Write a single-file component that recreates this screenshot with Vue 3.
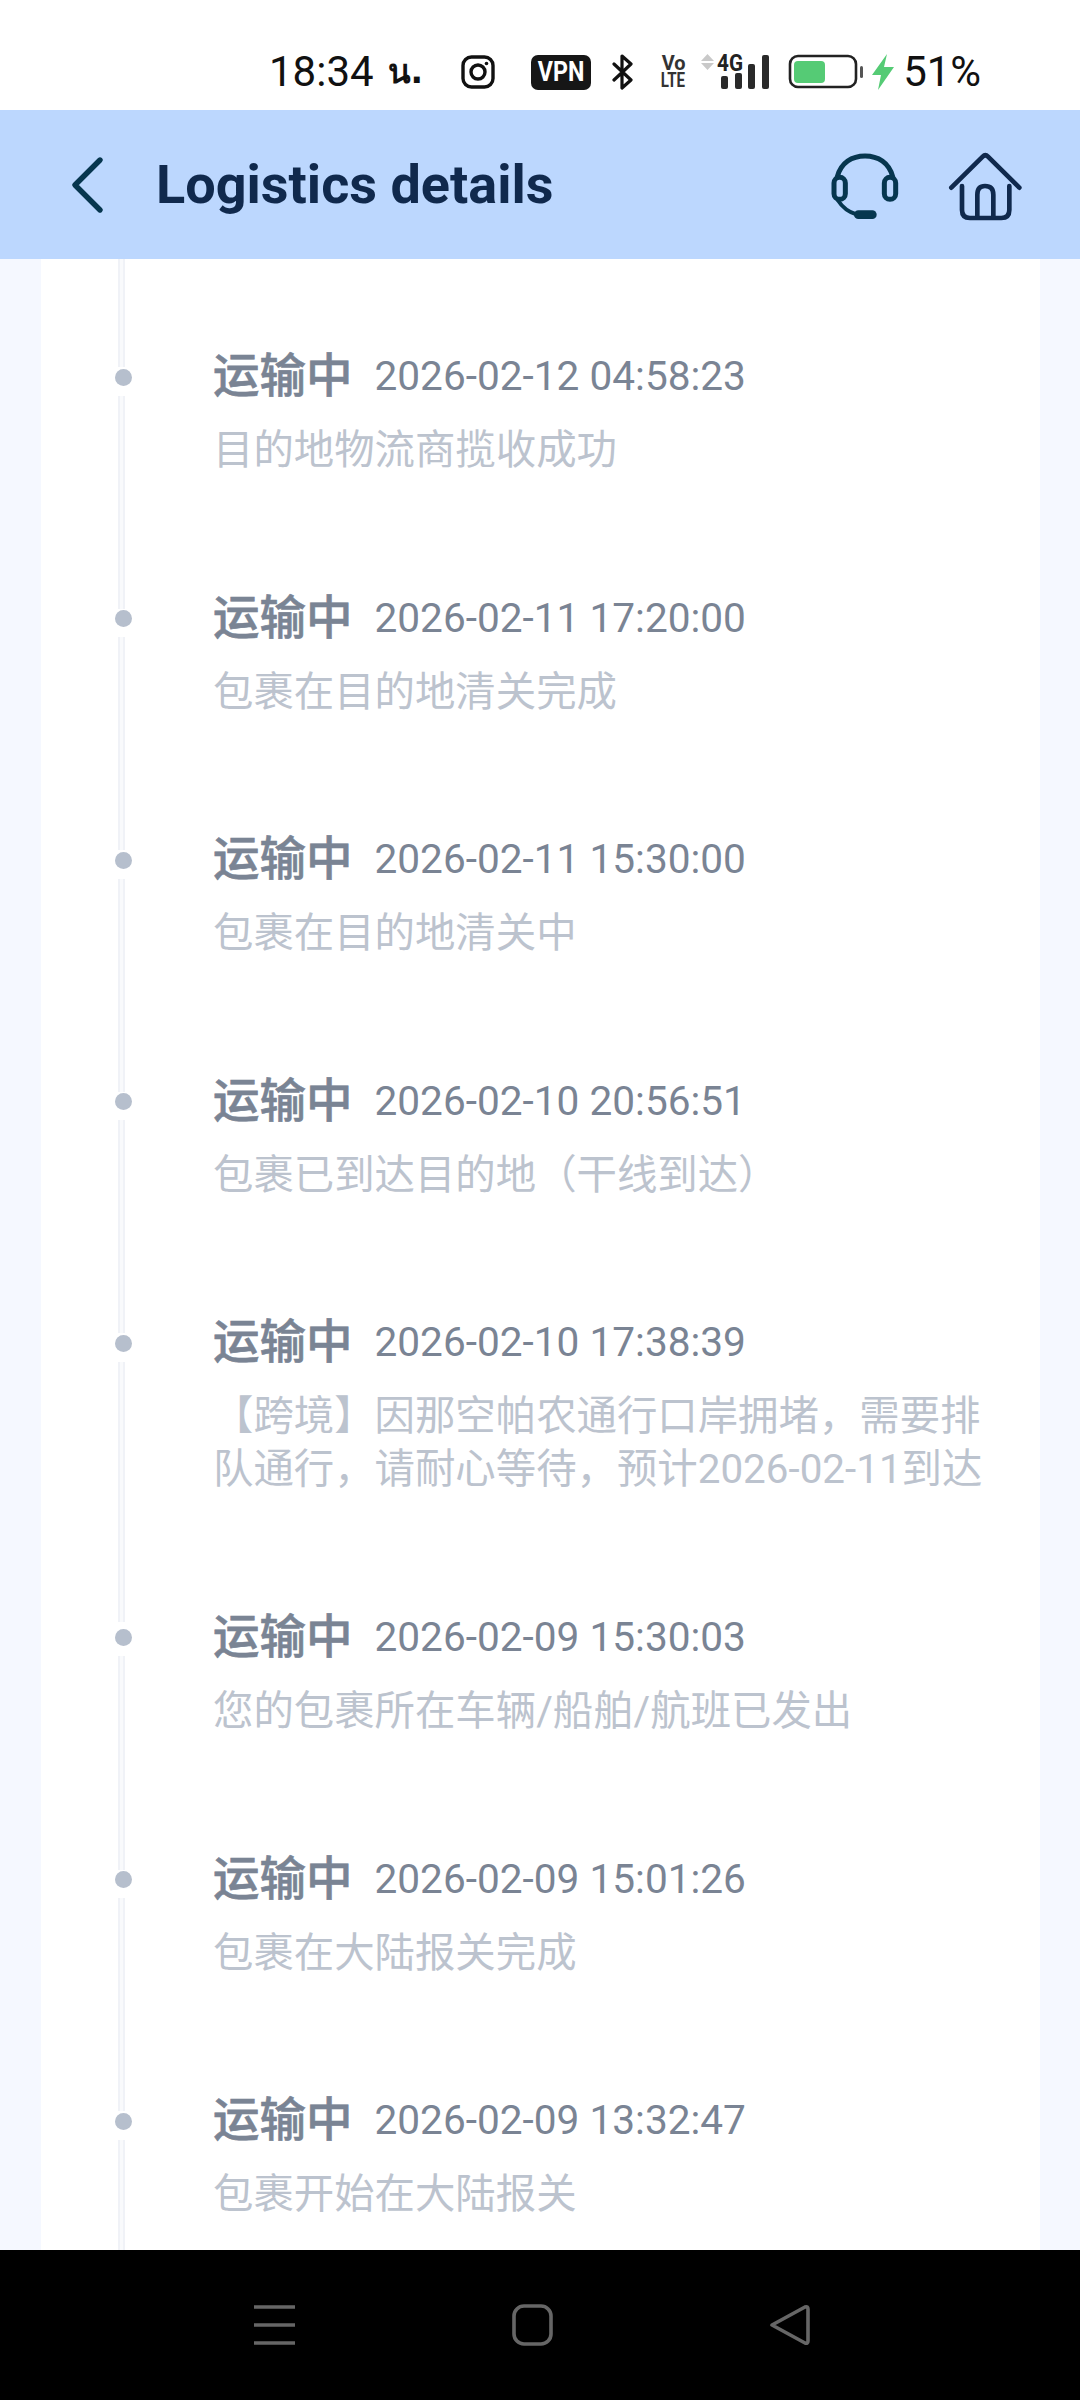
<script setup>
const events = [
  { time: '2026-02-12 04:58:23', desc: '目的地物流商揽收成功' },
  { time: '2026-02-11 17:20:00', desc: '包裹在目的地清关完成' },
  { time: '2026-02-11 15:30:00', desc: '包裹在目的地清关中' },
  { time: '2026-02-10 20:56:51', desc: '包裹已到达目的地（干线到达）' },
  { time: '2026-02-10 17:38:39', desc: '【跨境】因那空帕农通行口岸拥堵，需要排队通行，请耐心等待，预计2026-02-11到达', long: true },
  { time: '2026-02-09 15:30:03', desc: '您的包裹所在车辆/船舶/航班已发出' },
  { time: '2026-02-09 15:01:26', desc: '包裹在大陆报关完成' },
  { time: '2026-02-09 13:32:47', desc: '包裹开始在大陆报关' },
]

const bars = [
  { x: 723, y: 75, h: 13 },
  { x: 737, y: 72, h: 16 },
  { x: 750, y: 63, h: 25 },
  { x: 764, y: 54, h: 34 },
]
</script>

<template>
  <div class="page">
    <!-- status bar -->
    <div class="status">
      <span class="clock">18:34</span>
      <span class="clock-suffix">น.</span>
      <svg class="ig" viewBox="0 0 34 34" width="34" height="34">
        <rect x="2" y="2" width="30" height="30" rx="8.5" fill="none" stroke="#111" stroke-width="3.4" />
        <circle cx="17" cy="17" r="7" fill="none" stroke="#111" stroke-width="3.4" />
        <circle cx="25.5" cy="8.5" r="1.8" fill="#111" />
      </svg>
      <div class="vpn"><span>VPN</span></div>
      <svg class="bt" viewBox="0 0 22 36" width="22" height="36">
        <path d="M2 10 L19 26 L10 34 V2 L19 10 L2 26" fill="none" stroke="#111" stroke-width="3.2" stroke-linejoin="round" stroke-linecap="round" />
      </svg>
      <div class="volte">
        <span class="vo">Vo</span>
        <span class="lte">LTE</span>
      </div>
      <svg class="signal" viewBox="700 46 74 50" width="74" height="50">
        <path d="M703 60 L709.5 53 L716 60 Z M703 62 L709.5 69 L716 62 Z" fill="#c9c9c9" />
        <text x="732" y="69.5" text-anchor="middle" textLength="26" lengthAdjust="spacingAndGlyphs" class="g-text">4G</text>
        <rect v-for="b in bars" :key="b.x" :x="b.x" :y="b.y" :width="7" :height="b.h" rx="2" fill="#2a2a2a" />
      </svg>
      <svg class="battery" viewBox="0 0 76 36" width="76" height="36">
        <rect x="2" y="2" width="66" height="31" rx="8" fill="none" stroke="#222" stroke-width="2.6" />
        <rect x="6" y="7" width="31" height="22" rx="4" fill="#55cb75" />
        <rect x="72" y="12" width="3" height="12" rx="1.5" fill="#555" />
      </svg>
      <svg class="bolt" viewBox="0 0 22 36" width="22" height="36">
        <path d="M15 0 L0 21 H9 L6 36 L22 13 H12 Z" fill="#55cb75" />
      </svg>
      <span class="percent">51%</span>
    </div>

    <!-- header -->
    <header class="header">
      <svg class="back" viewBox="70 155 36 60" width="36" height="60">
        <path d="M100 160 L75 185 L100 210" fill="none" stroke="#06364f" stroke-width="5.4" stroke-linecap="round" stroke-linejoin="round" />
      </svg>
      <h1 class="title">Logistics details</h1>
      <div class="header-actions">
        <svg viewBox="140 81 230 225" width="76.7" height="75">
          <g fill="none" stroke="#06364f" stroke-linecap="round">
            <path d="M171 170 C182 128 215 108 254 108 C293 108 326 128 337 170" stroke-width="15" />
            <rect x="161" y="172" width="34" height="66" rx="17" stroke-width="15" />
            <rect x="312" y="172" width="34" height="66" rx="17" stroke-width="15" />
            <path d="M172 240 C186 262 204 276 228 283" stroke-width="12" />
            <path d="M234 284 H276" stroke-width="26" />
          </g>
        </svg>
        <svg viewBox="480 81 270 225" width="90" height="75">
          <g fill="none" stroke="#10294d" stroke-width="14" stroke-linecap="round" stroke-linejoin="round">
            <path d="M514 203 L608 110 Q616 102 624 110 L718 203" />
            <path d="M546 198 V270 Q546 294 570 294 H664 Q688 294 688 270 V198" />
            <path d="M592 290 V224 Q592 198 615 198 Q640 198 640 224 V290" />
          </g>
        </svg>
      </div>
    </header>

    <!-- timeline -->
    <main class="content">
      <div class="card">
        <div class="stub"><i class="line"></i></div>
        <div v-for="ev in events" :key="ev.time" class="item" :class="{ long: ev.long }">
          <div class="axis">
            <i class="dot"></i>
            <i class="line"></i>
          </div>
          <div class="body">
            <div class="row">
              <span class="state">运输中</span>
              <span class="time">{{ ev.time }}</span>
            </div>
            <p class="desc">{{ ev.desc }}</p>
          </div>
        </div>
      </div>
    </main>

    <!-- system nav -->
    <nav class="nav">
      <svg viewBox="0 0 41 42" width="41" height="42">
        <path d="M0 3 H41 M0 21 H41 M0 39 H41" stroke="#666" stroke-width="3.6" />
      </svg>
      <svg viewBox="0 0 41 42" width="41" height="42">
        <rect x="2" y="2" width="37" height="38" rx="10" fill="none" stroke="#666" stroke-width="3.6" />
      </svg>
      <svg viewBox="0 0 41 42" width="41" height="42">
        <path d="M2 21 L35 3 Q38 2 38 5 V37 Q38 40 35 39 Z" fill="none" stroke="#666" stroke-width="3.6" stroke-linejoin="round" />
      </svg>
    </nav>
  </div>
</template>

<style scoped>
.page {
  width: 1080px;
  height: 2400px;
  display: flex;
  flex-direction: column;
  background: #fff;
  font-family: Roboto, "Noto Sans CJK SC", sans-serif;
  overflow: hidden;
}

.status {
  height: 110px;
  flex: none;
  display: flex;
  align-items: center;
  padding: 34px 0 0 269px;
  color: #111;
  box-sizing: border-box;
}

.clock,
.clock-suffix,
.percent {
  font-size: 42px;
  line-height: 50px;
}

.clock-suffix {
  margin-left: 14px;
  font-family: "DejaVu Sans", "Noto Sans", sans-serif;
  font-size: 33px;
  font-weight: 700;
}

.ig { margin-left: 38px; }
.bt { margin-left: 21px; }
.signal { margin-left: 12px; }
.battery { margin-left: 16px; }
.bolt { margin-left: 8px; }
.percent { margin-left: 9px; width: 88px; }

.vpn {
  margin-left: 36px;
  width: 60px;
  height: 35px;
  flex: none;
  border-radius: 7px;
  background: #161616;
  color: #fff;
  display: flex;
  align-items: center;
  justify-content: center;
  font-size: 27px;
  font-weight: 700;
  line-height: 35px;
  overflow: hidden;
}

.vpn span {
  transform: scaleX(0.86);
}

.volte {
  margin-left: 26px;
  width: 26px;
  flex: none;
  display: flex;
  flex-direction: column;
  align-items: center;
  font-size: 21px;
  font-weight: 700;
  line-height: 17.5px;
  color: #333;
}

.vo { transform: scaleX(0.95); }
.lte { transform: scaleX(0.72); }

.g-text {
  font: 700 23px Roboto, sans-serif;
  fill: #222;
}

.header {
  height: 149px;
  flex: none;
  display: flex;
  align-items: center;
  padding: 0 50px 0 70px;
  background: #bcd7fe;
}

.back { flex: none; }

.title {
  margin: 0 0 0 50px;
  font-size: 54px;
  font-weight: 700;
  color: #10294d;
}

.header-actions {
  margin-left: auto;
  display: flex;
  align-items: center;
  gap: 36px;
}

.content {
  flex: 1;
  min-height: 0;
  overflow: hidden;
  background: #f5f8ff;
  padding: 0 40px 0 41px;
}

.card {
  height: 100%;
  background: #fff;
  overflow: hidden;
}

.stub {
  height: 108px;
  display: flex;
  padding-left: 77px;
}

.item {
  display: flex;
}

.axis {
  width: 172px;
  flex: none;
  display: flex;
  flex-direction: column;
  align-items: flex-start;
  padding: 1.5px 0 0 74px;
  box-sizing: border-box;
}

.dot {
  width: 17px;
  height: 17px;
  border-radius: 50%;
  background: #b6bfcd;
  margin-bottom: 10px;
}

.axis .line {
  flex: 1;
  margin-left: 3px;
}

.long .axis .line {
  margin-bottom: 6px;
}

.line {
  display: block;
  width: 7px;
  box-sizing: border-box;
  border-left: 2px solid #f0f2f7;
  border-right: 2px solid #f0f2f7;
  background: #f9fafc;
}

.body {
  flex: 1;
  min-width: 0;
  margin-top: -21px;
  padding: 0 40px 131.6px 0;
}

.row {
  display: flex;
  align-items: center;
  height: 60px;
  line-height: 60px;
  color: #7a8494;
}

.state {
  font-size: 46.5px;
  font-weight: 500;
  -webkit-text-stroke: 0.6px #7a8494;
}

.time {
  margin-left: 22px;
  font-size: 40.6px;
}

.desc {
  margin: 18px 0 0;
  font-size: 40.4px;
  line-height: 53px;
  color: #bcc3ce;
}

.nav {
  height: 150px;
  flex: none;
  background: #000;
  display: flex;
  align-items: center;
  gap: 217px;
  padding-left: 254px;
}
</style>

<style>
body { background: #fff; }
</style>
